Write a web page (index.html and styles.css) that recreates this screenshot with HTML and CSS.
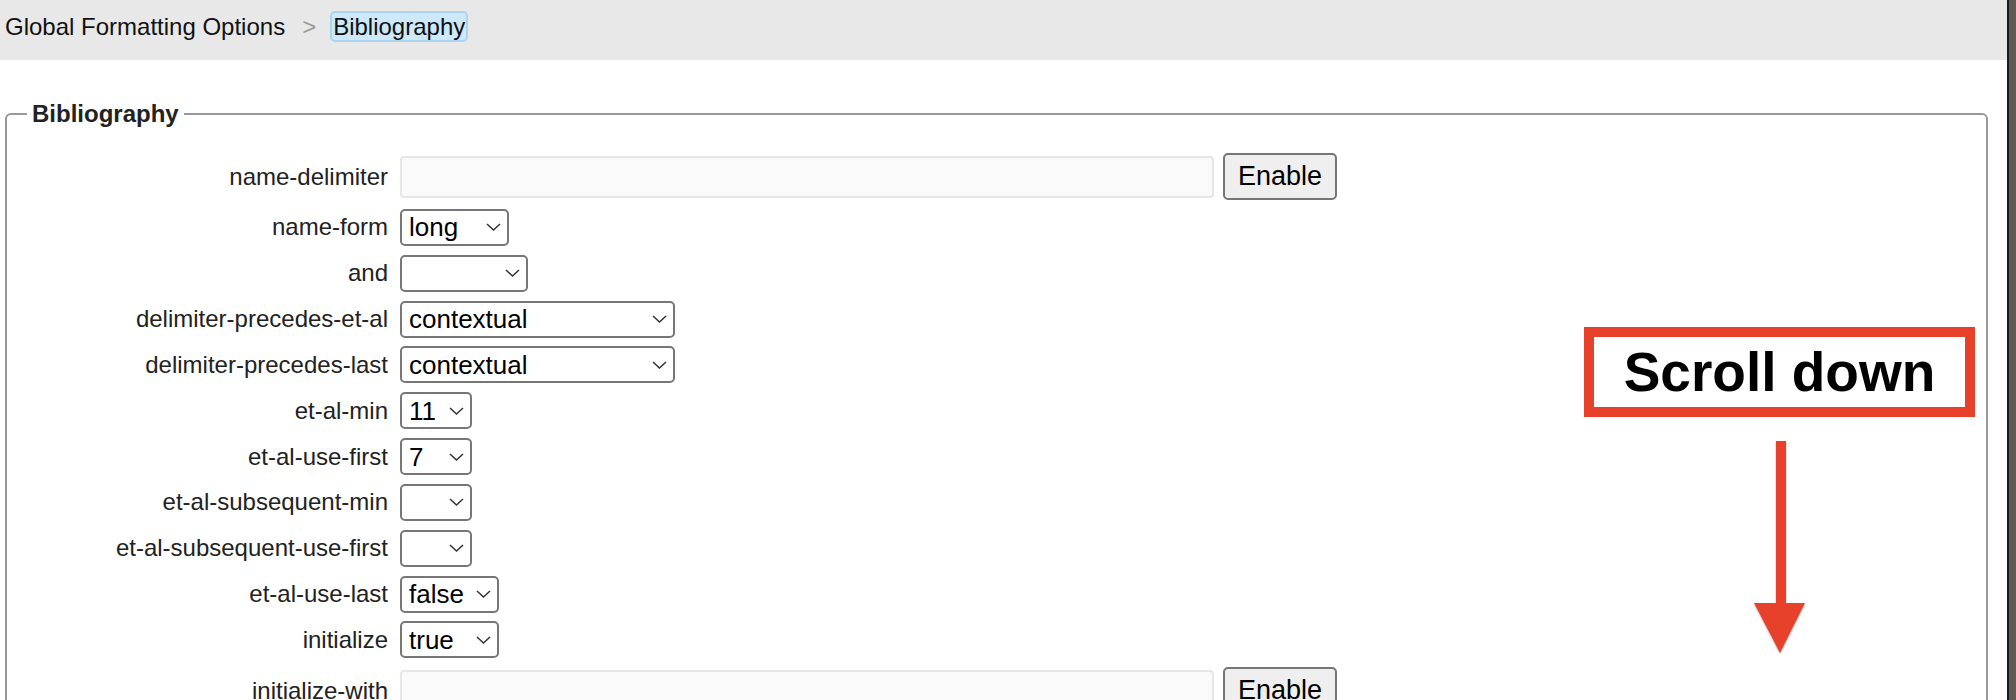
FILE: index.html
```html
<!DOCTYPE html>
<html lang="en">
<head>
<meta charset="utf-8">
<title>Global Formatting Options - Bibliography</title>
<link rel="stylesheet" href="styles.css">
</head>
<body>
<div class="window">
  <div class="page">
    <header class="crumbs">
      <span class="crumb">Global Formatting Options</span>
      <span class="sep">&gt;</span>
      <span class="crumb current">Bibliography</span>
    </header>
    <main class="content">
      <fieldset class="group">
        <legend>Bibliography</legend>
        <div class="form">
          <label class="lbl">name-delimiter</label>
          <div class="ctrl"><input class="text" type="text" disabled><button class="btn" type="button">Enable</button></div>

          <label class="lbl">name-form</label>
          <div class="sel"><select class="w-form"><option>long</option><option>short</option><option>count</option></select><svg viewBox="0 0 15 8"><polyline points="1,1 7.5,7 14,1"/></svg></div>

          <label class="lbl">and</label>
          <div class="sel"><select class="w-and"><option></option><option>text</option><option>symbol</option></select><svg viewBox="0 0 15 8"><polyline points="1,1 7.5,7 14,1"/></svg></div>

          <label class="lbl">delimiter-precedes-et-al</label>
          <div class="sel"><select class="w-long"><option>contextual</option><option>after-inverted-name</option><option>always</option><option>never</option></select><svg viewBox="0 0 15 8"><polyline points="1,1 7.5,7 14,1"/></svg></div>

          <label class="lbl">delimiter-precedes-last</label>
          <div class="sel"><select class="w-long"><option>contextual</option><option>after-inverted-name</option><option>always</option><option>never</option></select><svg viewBox="0 0 15 8"><polyline points="1,1 7.5,7 14,1"/></svg></div>

          <label class="lbl">et-al-min</label>
          <div class="sel"><select class="w-num"><option>11</option></select><svg viewBox="0 0 15 8"><polyline points="1,1 7.5,7 14,1"/></svg></div>

          <label class="lbl">et-al-use-first</label>
          <div class="sel"><select class="w-num"><option>7</option></select><svg viewBox="0 0 15 8"><polyline points="1,1 7.5,7 14,1"/></svg></div>

          <label class="lbl">et-al-subsequent-min</label>
          <div class="sel"><select class="w-num"><option></option></select><svg viewBox="0 0 15 8"><polyline points="1,1 7.5,7 14,1"/></svg></div>

          <label class="lbl">et-al-subsequent-use-first</label>
          <div class="sel"><select class="w-num"><option></option></select><svg viewBox="0 0 15 8"><polyline points="1,1 7.5,7 14,1"/></svg></div>

          <label class="lbl">et-al-use-last</label>
          <div class="sel"><select class="w-bool"><option>false</option><option>true</option></select><svg viewBox="0 0 15 8"><polyline points="1,1 7.5,7 14,1"/></svg></div>

          <label class="lbl">initialize</label>
          <div class="sel"><select class="w-bool"><option>true</option><option>false</option></select><svg viewBox="0 0 15 8"><polyline points="1,1 7.5,7 14,1"/></svg></div>

          <label class="lbl">initialize-with</label>
          <div class="ctrl"><input class="text" type="text" disabled><button class="btn" type="button">Enable</button></div>
        </div>
      </fieldset>
    </main>

    <div class="note">Scroll down</div>
    <svg class="arrow" viewBox="0 0 60 220" width="60" height="220">
      <rect x="26" y="1" width="10" height="164"/>
      <polygon points="4,163 55,163 30,213"/>
    </svg>
  </div>
  <div class="edge"></div>
</div>
</body>
</html>
```
FILE: styles.css
```css
html, body {
  margin: 0;
  height: 100%;
  overflow: hidden;
  background: #fff;
}

body {
  font-family: "Liberation Sans", Arial, Helvetica, sans-serif;
  color: #222;
}

.window {
  display: flex;
  height: 700px;
}

.page {
  flex: 1;
  position: relative;
  min-width: 0;
}

.edge {
  width: 9px;
  box-sizing: border-box;
  border-left: 2px solid #1c1c1c;
  background: #5f5a55;
}

/* breadcrumb bar */
.crumbs {
  height: 60px;
  box-sizing: border-box;
  background: #e8e8e8;
  display: flex;
  align-items: center;
  padding: 11px 0 18px 5px;
  font-size: 24px;
  color: #111;
}

.crumb {
  line-height: 27px;
}

.current {
  background: #cde8fb;
  border: 2px solid #a9d5f3;
  border-radius: 5px;
  padding: 0 1px;
}

.sep {
  color: #9a9a9a;
  margin: 0 14px 0 17px;
}

/* content */
.content {
  padding: 40px 19px 0 5px;
}

.group {
  margin: 0;
  min-width: 0;
  border: 2px solid #999;
  border-radius: 6px;
  padding: 25px 0 40px 0;
}

.group legend {
  margin-left: 20px;
  padding: 0 5px;
  font-weight: bold;
  font-size: 24px;
  color: #222;
}

.form {
  display: grid;
  grid-template-columns: 381px auto;
  column-gap: 12px;
  row-gap: 8.85px;
  align-items: center;
  justify-items: start;
}

.lbl {
  justify-self: end;
  font-size: 24px;
  color: #222;
  white-space: nowrap;
}

.ctrl {
  display: flex;
  align-items: center;
  gap: 9px;
}

.text {
  width: 814px;
  height: 42px;
  box-sizing: border-box;
  border: 2px solid #e6e6e6;
  border-radius: 4px;
  background: #fafafa;
  margin: 0;
}

.btn {
  width: 114px;
  height: 47px;
  box-sizing: border-box;
  margin: 0;
  padding: 0;
  border: 2px solid #767676;
  border-radius: 5px;
  background: #efefef;
  color: #000;
  font: 27px "Liberation Sans", Arial, sans-serif;
}

.sel {
  position: relative;
  display: inline-block;
  line-height: 0;
}

.sel select {
  appearance: none;
  -webkit-appearance: none;
  height: 37px;
  box-sizing: border-box;
  margin: 0;
  border: 2px solid #777;
  border-radius: 5px;
  background: #fff;
  color: #000;
  font: 26px "Liberation Sans", Arial, sans-serif;
  padding: 0 0 0 7px;
}

.sel svg {
  position: absolute;
  right: 8px;
  top: 50%;
  margin-top: -4px;
  width: 15px;
  height: 8px;
  pointer-events: none;
}

.sel svg polyline {
  fill: none;
  stroke: #333;
  stroke-width: 1.5;
}

.w-form { width: 109px; }
.w-and { width: 128px; }
.w-long { width: 275px; }
.w-num { width: 72px; }
.w-bool { width: 99px; }

/* annotation overlay */
.note {
  position: absolute;
  left: 1584px;
  top: 327px;
  width: 391px;
  height: 90px;
  box-sizing: border-box;
  border: 10px solid #e8412b;
  background: #fff;
  display: flex;
  align-items: center;
  justify-content: center;
  font: bold 55px "Liberation Sans", Arial, sans-serif;
  color: #000;
}

.arrow {
  position: absolute;
  left: 1750px;
  top: 440px;
  fill: #e8412b;
  filter: drop-shadow(0 1px 1px rgba(0, 0, 0, 0.3));
}
```
